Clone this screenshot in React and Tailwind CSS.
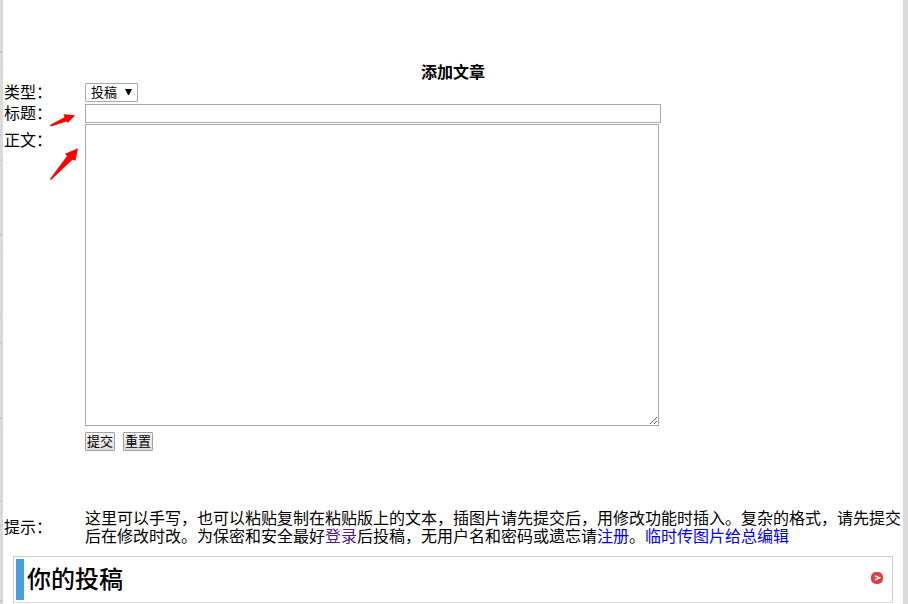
import React from "react";

function BackdropTexture() {
  return (
    <svg className="absolute left-0 top-0 h-full w-[3px]" aria-hidden="true">
      <defs>
        <pattern id="flecks" width="3" height="183" patternUnits="userSpaceOnUse">
          <path d="M0 51h2v2H0z" fill="#c3c3c3" />
          <path d="M2 65h1v1H2z" fill="#c8c8c8" />
          <path d="M0 161L3 158" stroke="#c3c3c3" />
          <path d="M0 134h1v2H0z" fill="#cccccc" />
        </pattern>
      </defs>
      <rect width="3" height="100%" fill="url(#flecks)" />
    </svg>
  );
}

function Arrows() {
  return (
    <svg
      className="pointer-events-none absolute left-[46px] top-[110px]"
      width="36"
      height="72"
      viewBox="46 110 36 72"
      aria-hidden="true"
    >
      <path
        d="M50 125L64.5 117.3L63.5 114.3L75.2 115.3L68 122.7L66.5 121.5L51 126.4Z"
        fill="#ff0000"
      />
      <path
        d="M50 179L67 156L65 153.8L78 148.2L75.5 160.8L72.5 159.8L51 180Z"
        fill="#ff0000"
      />
    </svg>
  );
}

export default function App() {
  return (
    <div
      lang="zh-CN"
      className="relative min-h-screen bg-[#dadada] pl-[3px] pr-[5px] font-['Liberation_Serif','Noto_Sans_CJK_SC',sans-serif] text-base leading-[18px] text-black"
    >
      <BackdropTexture />
      <main className="min-h-screen bg-white pt-16">
        <form className="px-px" onSubmit={(e) => e.preventDefault()}>
          <h1 className="h-[18px] text-center font-bold">添加文章</h1>
          <div className="grid grid-cols-[81px_minmax(0,1fr)]">
            <label htmlFor="kind" className="h-[21px] pt-[2px]">类型：</label>
            <div className="pt-px">
              <div className="relative w-[53px]">
                <select
                  id="kind"
                  className="block h-[19px] w-full appearance-none rounded-[1px] border border-[#a9a9a9] bg-white pl-[5px] text-[13px] leading-[17px]"
                >
                  <option>投稿</option>
                </select>
                <svg
                  className="pointer-events-none absolute right-[6px] top-[6px]"
                  width="7"
                  height="6"
                  viewBox="0 0 7 6"
                  aria-hidden="true"
                >
                  <path d="M0 0H7L4 6H3Z" />
                </svg>
              </div>
            </div>
            <label htmlFor="title" className="h-[21px] pt-[2px]">标题：</label>
            <div className="pt-px">
              <input
                id="title"
                type="text"
                className="block h-[19px] w-[576px] border border-[#a9a9a9] px-px text-[13px]"
              />
            </div>
            <label htmlFor="body" className="pt-2">正文：</label>
            <textarea
              id="body"
              className="block h-[302px] w-[574px] resize border border-[#a9a9a9] p-[2px] text-[13px]"
            />
          </div>
          <div className="flex gap-2 pl-[81px] pt-[6px]">
            <button
              type="submit"
              className="h-[19px] w-[30px] rounded-[1px] border border-[#a0a0a0] bg-linear-to-b from-[#f4f4f4] to-[#dddddd] text-[13px] leading-[17px]"
            >
              提交
            </button>
            <button
              type="reset"
              className="h-[19px] w-[30px] rounded-[1px] border border-[#a0a0a0] bg-linear-to-b from-[#f4f4f4] to-[#dddddd] text-[13px] leading-[17px]"
            >
              重置
            </button>
          </div>
          <div className="grid grid-cols-[81px_minmax(0,1fr)] items-center pt-[59px]">
            <span>提示：</span>
            <p>
              这里可以手写，也可以粘贴复制在粘贴版上的文本，插图片请先提交后，用修改功能时插入。复杂的格式，请先提交后在修改时改。为保密和安全最好
              <a href="#login" className="text-[#551a8b]">登录</a>
              后投稿，无用户名和密码或遗忘请
              <a href="#register" className="text-[#0000ee]">注册</a>。
              <a href="#upload" className="text-[#0000ee]">临时传图片给总编辑</a>
            </p>
          </div>
        </form>
        <section className="mx-[10px] mt-[10px] flex h-[47px] border border-[#cccccc] border-b-[#dddddd] p-[2px]">
          <div className="w-2 bg-[#4a9ee0]" />
          <h2 className="flex-1 pl-[3px] text-2xl font-medium leading-[43px]">你的投稿</h2>
          <a href="#more" aria-label="更多" className="mr-[7px] pt-[13px]">
            <svg className="block" width="12" height="12" viewBox="0 0 12 12" aria-hidden="true">
              <rect width="12" height="12" rx="5" fill="#dc4148" />
              <path d="M4 3.8L8.5 5.8L4 7.8" fill="none" stroke="#fff" strokeWidth="1.3" />
            </svg>
          </a>
        </section>
      </main>
      <Arrows />
    </div>
  );
}
